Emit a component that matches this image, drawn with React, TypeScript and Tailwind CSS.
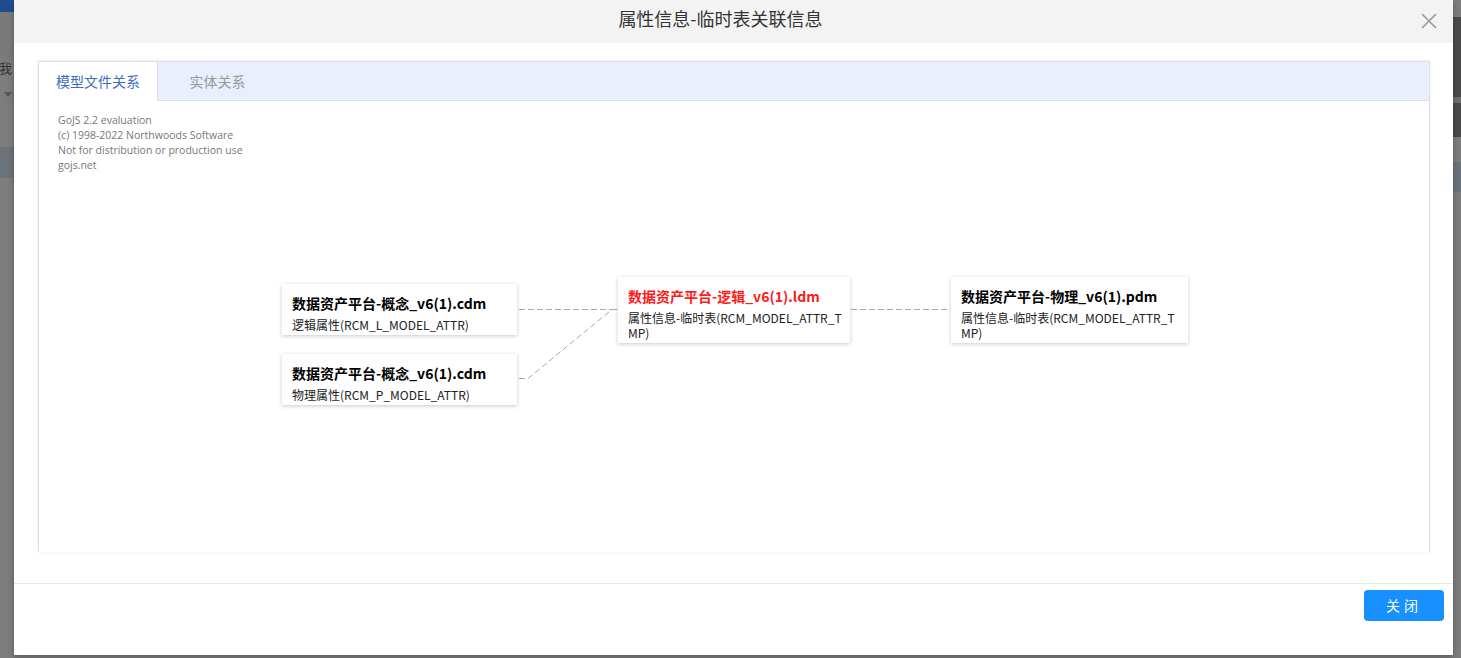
import React from "react";

const font = { fontFamily: '"Noto Sans CJK SC", "Noto Sans", sans-serif' };

type NodeProps = {
  left: number;
  top: number;
  width: number;
  title: string;
  sub: string;
  red?: boolean;
};

// diagram node (free canvas, so positioned)
function DiagramNode({ left, top, width, title, sub, red }: NodeProps) {
  return (
    <div
      className="absolute bg-white pl-[10px] pr-[6px] pt-[7px] pb-[3px] shadow-[0_1px_4px_rgba(0,0,0,0.22)]"
      style={{ left, top, width }}
    >
      <div className={`text-[14px] font-bold leading-[24px] ${red ? "text-[#ff1a1a]" : "text-black"}`}>{title}</div>
      <div className="mt-[2px] text-[12px] leading-[15px] text-[#222] break-all">{sub}</div>
    </div>
  );
}

export default function App() {
  return (
    <div className="relative w-[1461px] h-[658px] overflow-hidden bg-[#7d7d7d]" style={font}>
      {/* page behind the overlay */}
      <div className="flex flex-col w-[14px]">
        <div className="h-[12px] bg-[#1d4f8f]" />
        <div className="h-[46px] bg-[#7a7a7a]" />
        <div className="h-[20px] text-[13px] leading-[20px] text-[#333] -ml-[1px]">我</div>
        <div className="h-[32px] flex items-center pl-[4px]">
          <div className="w-0 h-0 border-l-[4px] border-r-[4px] border-t-[5px] border-l-transparent border-r-transparent border-t-[#555]" />
        </div>
        <div className="h-[37px]" />
        <div className="h-[31px] bg-[#6d737a]" />
      </div>
      <div className="absolute right-0 top-0 w-[8px] h-full flex flex-col">
        <div className="h-[17px] bg-[#7d7d7d]" />
        <div className="h-[80px] bg-[#4a4a4a]" />
        <div className="h-[6px] bg-[#6f6f6f]" />
        <div className="h-[34px] bg-[#4a4a4a]" />
        <div className="h-[25px] bg-[#7d7d7d]" />
        <div className="h-[30px] bg-[#6b737c]" />
      </div>

      {/* modal */}
      <div className="absolute left-[14px] top-0 w-[1439px] h-[655px] bg-white flex flex-col shadow-[0_2px_6px_rgba(0,0,0,0.3)]">
        <div className="h-[43px] bg-[#f3f3f3] flex items-center justify-center relative pr-[26px] pb-[6px]">
          <span className="text-[18px] text-[#333]">属性信息-临时表关联信息</span>
          <svg className="absolute right-[15px] top-[12px]" width="18" height="18" viewBox="0 0 18 18">
            <path d="M2 2L16 16M16 2L2 16" stroke="#999" strokeWidth="1.6" />
          </svg>
        </div>

        <div className="flex-1 px-[24px] pt-[18px] pr-[23px] pb-[31px] border-b border-[#e8e8e8]">
          <div className="h-[491px] border border-b-0 border-[#dcdfe6] shadow-[0_0_4px_rgba(0,0,0,0.08)] flex flex-col">
            <div className="h-[39px] flex bg-[#e9effd] border-b border-[#dcdfe6]">
              <div className="w-[119px] h-[39px] bg-white border-r border-[#dcdfe6] flex items-center justify-center text-[14px] text-[#3d6cc1]">
                模型文件关系
              </div>
              <div className="w-[119px] flex items-center justify-center text-[14px] text-[#999]">实体关系</div>
            </div>
            <div className="relative flex-1">
              <div className="absolute left-[19px] top-[12px] text-[10.5px] leading-[15px] text-[#777]" style={{ fontFamily: '"Open Sans", "Noto Sans", sans-serif' }}>
                <div>GoJS 2.2 evaluation</div>
                <div>(c) 1998-2022 Northwoods Software</div>
                <div>Not for distribution or production use</div>
                <div>gojs.net</div>
              </div>

              <svg className="absolute left-0 top-0" width="1390" height="452">
                <g stroke="#aaa" strokeWidth="1" strokeDasharray="6,3" fill="none">
                  <path d="M480 208.5H572L580 208.5" />
                  <path d="M480 277.5H489L573 208.5L580 208.5" />
                  <path d="M812 208.5H908" />
                </g>
              </svg>

              <DiagramNode left={243} top={183} width={235} title="数据资产平台-概念_v6(1).cdm" sub="逻辑属性(RCM_L_MODEL_ATTR)" />
              <DiagramNode left={243} top={253} width={235} title="数据资产平台-概念_v6(1).cdm" sub="物理属性(RCM_P_MODEL_ATTR)" />
              <DiagramNode left={579} top={176} width={232} title="数据资产平台-逻辑_v6(1).ldm" sub="属性信息-临时表(RCM_MODEL_ATTR_TMP)" red />
              <DiagramNode left={912} top={176} width={237} title="数据资产平台-物理_v6(1).pdm" sub="属性信息-临时表(RCM_MODEL_ATTR_TMP)" />
            </div>
          </div>
        </div>

        <div className="h-[71px] flex justify-end pt-[6px] pr-[9px]">
          <button className="w-[80px] h-[31px] rounded-[4px] bg-[#1890ff] text-white text-[14px] tracking-[4px]">关闭</button>
        </div>
      </div>
    </div>
  );
}
